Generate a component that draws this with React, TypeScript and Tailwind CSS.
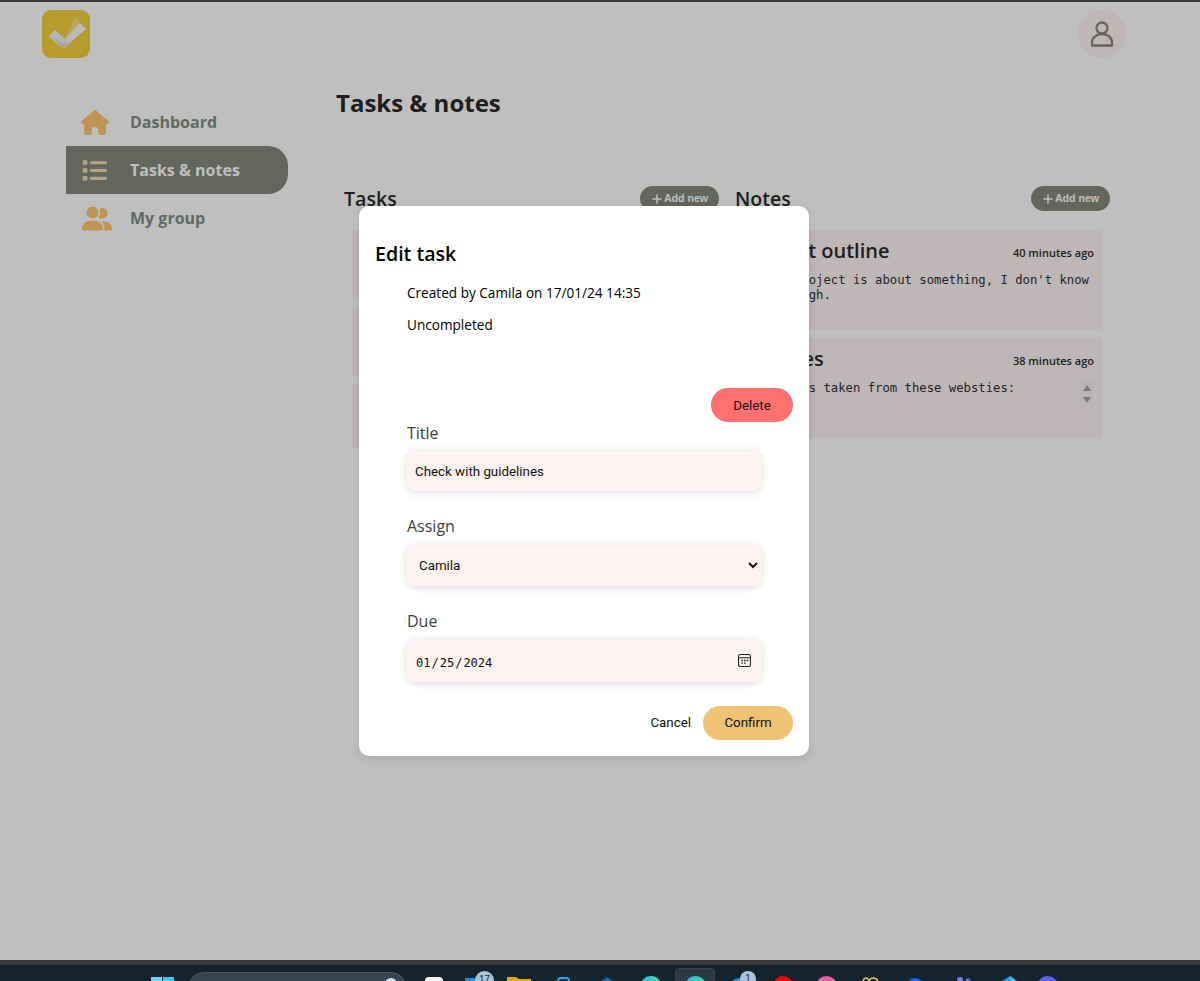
import { FaHouse, FaList, FaPlus, FaUserGroup } from 'react-icons/fa6';

const openSans = 'font-["Open_Sans",sans-serif]';

function Logo() {
    return (
        <svg viewBox="0 0 48 48" className="w-12 h-12">
            <defs>
                <linearGradient id="tick" x1="0" y1="1" x2="1" y2="0">
                    <stop offset="0" stopColor="#dedede" />
                    <stop offset="0.5" stopColor="#f8f8f8" />
                    <stop offset="1" stopColor="#ffffff" />
                </linearGradient>
            </defs>
            <rect width="48" height="48" rx="9" fill="#f5d03c" />
            <path d="M23 29L33 7l6 6z" fill="#ffffff" opacity="0.3" />
            <path d="M9 31l13 8 9-8-9 4z" fill="#ffffff" opacity="0.3" />
            <path d="M6 27l7-7 10 9 15-16 6 6-22 19z" fill="url(#tick)" />
            <path d="M12 29l10 8 6-5-6 2z" fill="#a8a8a8" opacity="0.35" />
        </svg>
    );
}

function NavItem({ icon, label, active }: { icon: React.ReactNode; label: string; active?: boolean }) {
    return (
        <div className={`flex items-center h-12 rounded-r-[20px] ${active ? 'bg-[#83897c] text-[#ffffff]' : 'text-[#848d86]'}`}>
            <div className={`w-[64px] flex justify-start pl-[16px] ${active ? 'text-[#f5dcae]' : 'text-[#ffc56c]'}`}>{icon}</div>
            <span className="text-base font-bold">{label}</span>
        </div>
    );
}

function AddNew() {
    return (
        <button className='flex items-center justify-center gap-[1px] w-[79px] h-[25px] rounded-full bg-[#83897c] text-white text-[10.6px] font-bold font-["Liberation_Sans",sans-serif]'>
            <FaPlus className="w-[12px] h-[12px]" />
            Add new
        </button>
    );
}

function NoteCard({ title, age, lines, scroll }: { title: string; age: string; lines: string[]; scroll?: boolean }) {
    return (
        <div className="relative h-[100px] bg-[#fff5f5] pl-[13px] pr-[8px] pt-[8px]">
            <div className="flex items-center justify-between h-[26px]">
                <span className="text-[20px] font-semibold text-[#2a2a2a]">{title}</span>
                <span className="text-[11px] font-semibold text-[#2a2a2a] pt-[5px]">{age}</span>
            </div>
            <div className='mt-[9px] pl-[9px] text-[12.25px] leading-[15px] text-[#2d2d33] font-["DejaVu_Sans_Mono",monospace] whitespace-pre'>
                {lines.map((line) => <div key={line}>{line}</div>)}
            </div>
            {scroll && (
                <div className="absolute right-[8px] top-[41px] w-[15px] h-[30px] bg-[#f9f0f0] flex flex-col items-center justify-around py-[3px]">
                    <svg viewBox="0 0 8 6" className="w-[8px] h-[6px]"><path d="M4 0l4 6H0z" fill="#a3a3a3" /></svg>
                    <svg viewBox="0 0 8 6" className="w-[8px] h-[6px]"><path d="M4 6L0 0h8z" fill="#a3a3a3" /></svg>
                </div>
            )}
        </div>
    );
}

function Field({ label, className, children }: { label: string; className: string; children: React.ReactNode }) {
    return (
        <div className={className}>
            <div className="text-base leading-[22px] text-[#3f3f3f] font-normal">{label}</div>
            {children}
        </div>
    );
}

const fieldClass = 'w-[354px] rounded-lg bg-[#fff3f1] shadow-[0_1px_8px_rgba(0,0,0,0.16)] text-[#111111] outline-none';

function Taskbar() {
    return (
        <div className="shrink-0 h-[21px] overflow-hidden">
            <div className="h-[5px] bg-[#3b3b3b]" />
            <div className="relative h-4 bg-[#14242f]">
                {/* start, search */}
                <div className="absolute left-[151px] top-[12px] grid grid-cols-2 gap-[1px] w-[23px]">
                    <div className="h-[11px] bg-[#6fd3f7]" />
                    <div className="h-[11px] bg-[#4cc2f1]" />
                </div>
                <div className="absolute left-[188px] top-[7px] w-[219px] h-8 rounded-full bg-[#35454f] border border-[#465660]" />
                <div className="absolute left-[385px] top-[13px] w-3 h-3 rounded-full bg-[#cde9f7]" />
                {/* pinned apps */}
                <div className="absolute left-[425px] top-[12px] w-[18px] h-8 rounded-sm bg-[#f5f5f5]" />
                <div className="absolute left-[465px] top-[13px] w-[18px] h-8 bg-[#1a8fe0]" />
                <svg viewBox="0 0 24 4" className="absolute left-[507px] top-[12px] w-[24px] h-[4px]"><path d="M0 4V1q0-1 1-1h8l3 2h12v2z" fill="#e8a80c" /></svg>
                <div className="absolute left-[557px] top-[12px] w-[13px] h-8 rounded-sm border-2 border-[#27a7f0]" />
                <svg viewBox="0 0 18 8" className="absolute left-[598px] top-[12px] w-[18px] h-[8px]"><path d="M9 0l9 6v2H0V6z" fill="#0f6cbd" /></svg>
                <div className="absolute left-[640px] top-[11px] w-[22px] h-[22px] rounded-full bg-gradient-to-r from-[#2bb5e8] to-[#4fdc9a]" />
                <div className="absolute left-[675px] top-[3px] w-[40px] h-8 rounded bg-[#2b3a45] border border-[#36454f]" />
                <div className="absolute left-[685px] top-[11px] w-[21px] h-[21px] rounded-full bg-gradient-to-r from-[#2bb5e8] to-[#4fdc9a]" />
                <div className="absolute left-[730px] top-[13px] w-[18px] h-8 rounded-full bg-[#1a8fe0]" />
                <div className="absolute left-[773px] top-[11px] w-[20px] h-[20px] rounded-full bg-[#ff0000]" />
                <div className="absolute left-[816px] top-[11px] w-[21px] h-[21px] rounded-full bg-gradient-to-b from-[#f0609a] to-[#a855d8]" />
                <svg viewBox="0 0 18 4" className="absolute left-[862px] top-[12px] w-[18px] h-[4px]" fill="none" stroke="#e9c84a" strokeWidth="1.500"><path d="M1 4q1-3 3-3t3 3M7 4q1-3 4-3t5 3" /></svg>
                <div className="absolute left-[906px] top-[13px] w-[18px] h-[18px] rounded-full bg-[#0866ff]" />
                <svg viewBox="0 0 14 4" className="absolute left-[957px] top-[12px] w-[14px] h-[4px]"><circle cx="3" cy="3" r="3" fill="#7b7fe0" /><circle cx="11" cy="3.500" r="2.500" fill="#6264c8" /></svg>
                <svg viewBox="0 0 15 5" className="absolute left-[1002px] top-[11px] w-[15px] h-[5px]"><path d="M8 0L0 5h8z" fill="#1b9de2" /><path d="M8 0l7 5H8z" fill="#3fc1f0" /></svg>
                <div className="absolute left-[1037px] top-[11px] w-[21px] h-[21px] rounded-full bg-[#5865f2]" />
                {/* badges */}
                <div className="absolute left-[475px] top-[6px] w-[19px] h-[19px] rounded-full bg-[#a6c5d6] text-[10px] leading-[18px] text-center text-[#1c2a33] font-['Liberation_Sans',sans-serif]">17</div>
                <div className="absolute left-[740px] top-[6px] w-[16px] h-[16px] rounded-full bg-[#a6c5d6] text-[10px] leading-[16px] text-center text-[#1c2a33] font-['Liberation_Sans',sans-serif]">1</div>
            </div>
        </div>
    );
}

export default function App() {
    return (
        <div className={`h-[981px] flex flex-col overflow-hidden bg-white ${openSans}`}>
            <div className="shrink-0 h-[2px] bg-[#3b3b3b]" />
            <div className="relative flex-1 min-h-0">
                {/* header */}
                <div className="flex items-start justify-between pl-[42px] pr-[74px] pt-[8px] h-[96px]">
                    <Logo />
                    <div className="w-12 h-12 rounded-full bg-[#fff5f5] flex items-center justify-center">
                        <svg viewBox="0 0 24 26" className="w-[24px] h-[26px]" fill="none" stroke="#83897c" strokeWidth="2.300" strokeLinejoin="round">
                            <circle cx="12" cy="7" r="5.500" />
                            <path d="M2 24.500v-3a10 8.500 0 0 1 20 0v3z" />
                        </svg>
                    </div>
                </div>

                <div className="flex">
                    {/* sidebar */}
                    <div className="w-[222px] ml-[66px] shrink-0">
                        <NavItem icon={<FaHouse className="w-[28px] h-[25px] -ml-[1px]" />} label="Dashboard" />
                        <NavItem active icon={<FaList className="w-[25px] h-[25px]" />} label="Tasks & notes" />
                        <NavItem icon={<FaUserGroup className="w-[30px] h-[25px]" />} label="My group" />
                    </div>

                    {/* main */}
                    <div className="ml-[48px] flex-1 -mt-[11px]">
                        <h1 className="text-2xl font-bold text-[#2a2a2a] leading-[32px]">Tasks &amp; notes</h1>
                        <div className="mt-[67px] pl-[8px] grid grid-cols-[391px_375px]">
                            <div>
                                <div className="flex items-center justify-between pr-[16px] h-[25px]">
                                    <span className="text-[19.6px] font-semibold text-[#2a2a2a]">Tasks</span>
                                    <AddNew />
                                </div>
                                <div className="mt-[19px] ml-[8px] w-[300px] flex flex-col gap-[8px]">
                                    <div className="h-[69px] bg-[#fff5f5]" />
                                    <div className="h-[69px] bg-[#fff5f5]" />
                                    <div className="h-[64px] bg-[#fff5f5]" />
                                </div>
                            </div>
                            <div>
                                <div className="flex items-center justify-between h-[25px]">
                                    <span className="text-[19.6px] font-semibold text-[#2a2a2a]">Notes</span>
                                    <AddNew />
                                </div>
                                <div className="mt-[19px] w-[367px] flex flex-col gap-[8px]">
                                    <NoteCard title="Project outline" age="40 minutes ago" lines={["This project is about something, I don't know", "is enough."]} />
                                    <NoteCard title="Sources" age="38 minutes ago" lines={["Pictures taken from these websties:"]} scroll />
                                </div>
                            </div>
                        </div>
                    </div>
                </div>

                {/* backdrop and dialog */}
                <div className="absolute inset-0 bg-black/25">
                    <div className="absolute left-[359px] top-[204px] w-[450px] h-[550px] rounded-[10px] bg-white px-[16px] pt-[36px] shadow-[0_2px_8px_rgba(0,0,0,0.12)]">
                        <h2 className="text-[19.6px] leading-[24px] font-semibold text-black">Edit task</h2>
                        <div className="pl-[32px]">
                            <p className="mt-[18px] text-[13.6px] leading-[18px] text-black">Created by Camila on 17/01/24 14:35</p>
                            <p className="mt-[14px] text-[13.6px] leading-[18px] text-black">Uncompleted</p>
                        </div>
                        <div className="mt-[54px] flex justify-end">
                            <button className='w-[82px] h-[34px] pt-[1px] rounded-full bg-[#ff7070] text-[#111111] text-[13.33px] font-["Roboto",sans-serif]'>Delete</button>
                        </div>
                        <div className="pl-[32px]">
                            <Field label="Title" className="">
                                <input readOnly value="Check with guidelines" className={`${fieldClass} mt-[7px] block h-[40px] px-[8px] text-[13.33px] font-["Roboto",sans-serif]`} />
                            </Field>
                            <Field label="Assign" className="mt-[24px]">
                                <select defaultValue="Camila" className={`${fieldClass} mt-[8px] block h-[41px] px-[8px] text-[13.33px] font-["Roboto",sans-serif]`}>
                                    <option>Camila</option>
                                </select>
                            </Field>
                            <Field label="Due" className="relative mt-[24px]">
                                <input type="date" defaultValue="2024-01-25" className={`${fieldClass} mt-[8px] block h-[42px] px-[8px] pt-[3px] text-[12px] font-["DejaVu_Sans_Mono",monospace] [&::-webkit-calendar-picker-indicator]:opacity-0`} />
                                <svg viewBox="0 0 12 12" className="absolute right-[42px] top-[44px] w-[13px] h-[13px] pointer-events-none" fill="none" stroke="#222222">
                                    <rect x="0.500" y="0.500" width="11" height="11" rx="1.500" />
                                    <path d="M0.500 3.500h11" />
                                    <path d="M3 6h1.500M5.500 6H7M8 6h1.500M3 8.500h1.500M5.500 8.500H7" strokeWidth="1.200" />
                                </svg>
                            </Field>
                        </div>
                        <div className='mt-[24px] flex justify-end items-center gap-[12px] text-[13.33px] text-[#111111] font-["Roboto",sans-serif]'>
                            <button>Cancel</button>
                            <button className="w-[90px] h-[34px] rounded-full bg-[#f0c274]">Confirm</button>
                        </div>
                    </div>
                </div>
            </div>
            <Taskbar />
        </div>
    );
}
